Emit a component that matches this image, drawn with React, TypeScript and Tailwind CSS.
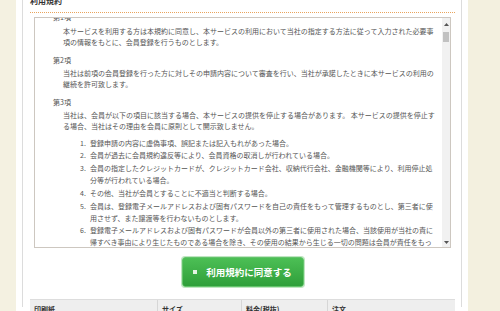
import React from "react";

const items: string[] = [
  "登録申請の内容に虚偽事項、誤記または記入もれがあった場合。",
  "会員が過去に会員規約違反等により、会員資格の取消しが行われている場合。",
  "会員の指定したクレジットカードが、クレジットカード会社、収納代行会社、金融機関等により、利用停止処分等が行われている場合。",
  "その他、当社が会員とすることに不適当と判断する場合。",
  "会員は、登録電子メールアドレスおよび固有パスワードを自己の責任をもって管理するものとし、第三者に使用させず、また譲渡等を行わないものとします。",
  "登録電子メールアドレスおよび固有パスワードが会員以外の第三者に使用された場合、当該使用が当社の責に帰すべき事由により生じたものである場合を除き、その使用の結果から生じる一切の問題は会員が責任をもって対処するものとし、当社は一切の責任を負わないものとします。",
];

export default function App() {
  return (
    <div
      className="w-[500px] h-[311px] overflow-hidden flex bg-[#f3f0df]"
      style={{ fontFamily: '"Noto Sans CJK JP", "Noto Sans", sans-serif' }}
    >
      <div className="w-[16px] shrink-0 bg-[#f4f1e1]" />
      <div className="w-[452px] shrink-0 bg-white px-[6px]">
        <div className="h-full border-x border-[#dcdcdc] pl-[7px] pr-[6px]">
          <div className="mt-[-4px] pb-[6px] border-b border-dotted border-[#e9a45c]">
            <div className="text-[8px] leading-[10px] font-bold text-[#333]">利用規約</div>
          </div>
          <div className="mt-[4px] ml-[4px] w-[417px] h-[231px] border border-[#cdc7c0] flex">
            <div className="flex-1 overflow-hidden text-[7px] text-[#555]">
              <div className="mt-[-6px] pl-[18px]">
                <div className="leading-[11.5px] mb-[2px]">第1項</div>
                <p className="ml-[10px] w-[372px] leading-[11.5px] mb-[6.5px]">
                  本サービスを利用する方は本規約に同意し、本サービスの利用において当社の指定する方法に従って入力された必要事項の情報をもとに、会員登録を行うものとします。
                </p>
                <div className="leading-[11.5px] mb-[1px]">第2項</div>
                <p className="ml-[10px] w-[372px] leading-[11.5px] mb-[6.5px]">
                  当社は前項の会員登録を行った方に対しその申請内容について審査を行い、当社が承諾したときに本サービスの利用の継続を許可致します。
                </p>
                <div className="leading-[11.5px] mb-[1px]">第3項</div>
                <p className="ml-[10px] w-[372px] leading-[11.5px] mb-[4px]">
                  当社は、会員が以下の項目に該当する場合、本サービスの提供を停止する場合があります。 本サービスの提供を停止する場合、当社はその理由を会員に原則として開示致しません。
                </p>
                <div className="ml-[27px]">
                  {items.map((t, i) => (
                    <div key={i} className="flex leading-[12px] mb-[0.8px]">
                      <span className="w-[10px] shrink-0">{i + 1}.</span>
                      <span className="w-[344px]">{t}</span>
                    </div>
                  ))}
                </div>
              </div>
            </div>
            <div className="w-[8px] shrink-0 bg-[#f1f1f1] flex flex-col items-center">
              <div className="h-[12px] flex items-center justify-center">
                <svg width="5" height="3" viewBox="0 0 5 3">
                  <polygon points="2.5,0 5,3 0,3" fill="#555" />
                </svg>
              </div>
              <div className="w-[6px] h-[10px] mt-[2px] bg-[#c1c1c1]" />
              <div className="flex-1" />
              <div className="h-[10px] flex items-center justify-center">
                <svg width="5" height="3" viewBox="0 0 5 3">
                  <polygon points="0,0 5,0 2.5,3" fill="#555" />
                </svg>
              </div>
            </div>
          </div>
          <div className="mt-[9px] flex justify-center">
            <button className="w-[122px] h-[30px] rounded-[3px] border border-[#63c36b] shadow-[0_0_0_1px_#bfe6c1] bg-gradient-to-b from-[#4cbf55] to-[#2f9f3a] flex items-center justify-center gap-[9px] text-white">
              <span className="w-[4px] h-[4px] bg-[#e4f3e4]" />
              <span className="text-[9.5px] leading-[12px] font-bold tracking-[0px]">利用規約に同意する</span>
            </button>
          </div>
          <div className="mt-[12px] flex h-[20px] bg-[#eeeeee] border-t border-[#dddddd] text-[7px] font-bold text-[#333] leading-[10px]">
            <div className="w-[128px] pl-[4px] pt-[4px] border-r border-[#d6d6d6]">印刷紙</div>
            <div className="w-[84px] pl-[4px] pt-[4px] border-r border-[#d6d6d6]">サイズ</div>
            <div className="w-[86px] pl-[4px] pt-[4px] border-r border-[#d6d6d6]">料金(税抜)</div>
            <div className="flex-1 pl-[4px] pt-[4px]">注文</div>
          </div>
        </div>
      </div>
      <div className="flex-1 bg-[#f3f0df]" />
    </div>
  );
}
